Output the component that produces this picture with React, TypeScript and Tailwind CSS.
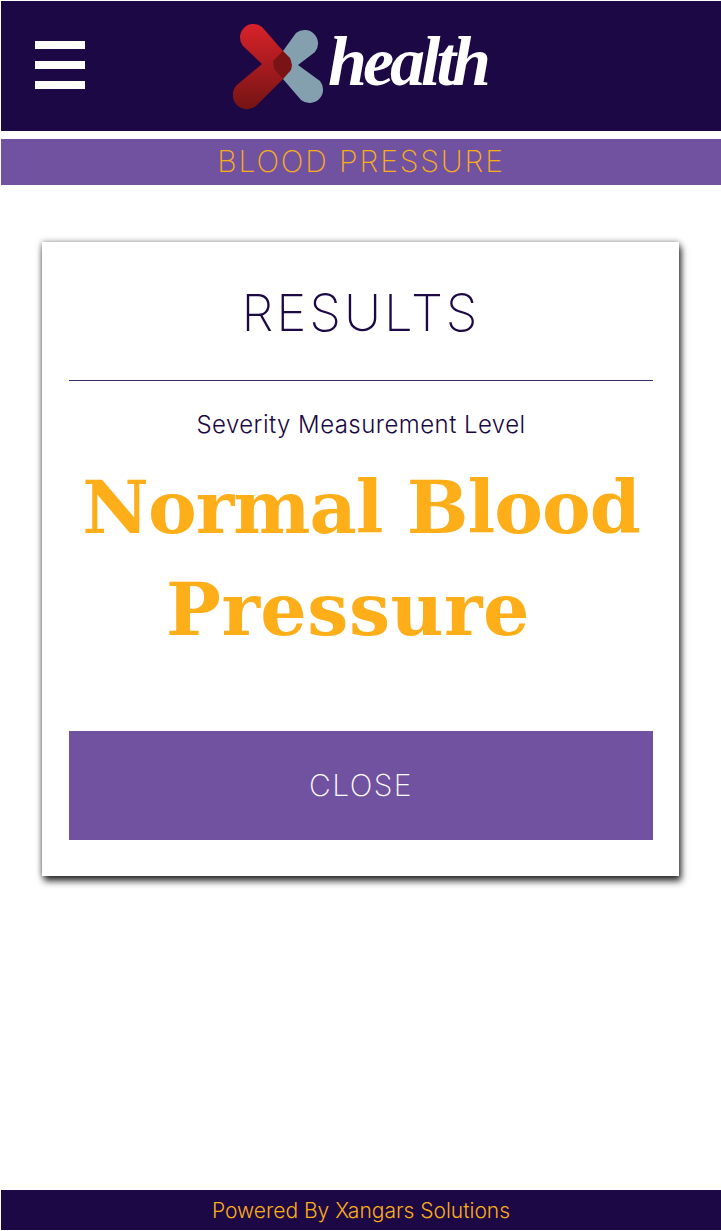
function Logo() {
  return (
    <svg width="92" height="88" viewBox="233 22 92 88" className="shrink-0">
      <defs>
        <linearGradient id="redGrad" x1="0" y1="0" x2="0" y2="1">
          <stop offset="0" stopColor="#d82229" />
          <stop offset="1" stopColor="#741414" />
        </linearGradient>
      </defs>
      <path d="M283 51 L296 33 A13.5 13.5 0 0 1 315 52 L298 65 L320 81 A13.5 13.5 0 0 1 301 100 L283 79 Z" fill="#84a0af" />
      <path d="M243 46 A13.5 13.5 0 0 1 262 27 L283 51 L292 65 L283 79 L256 106 A14.2 14.2 0 0 1 238 84 L262 64 Z" fill="url(#redGrad)" />
      <path d="M283 51 L290 58 Q293 65 291 70 L283 79 L274 69 L273 61 Z" fill="#7a1315" />
    </svg>
  );
}

export default function App() {
  return (
    <div className="w-[721px] h-[1231px] bg-white flex flex-col pt-px pb-px pl-px overflow-hidden font-['Inter',sans-serif]">
      <header className="h-[130px] shrink-0 bg-[#1b0845] flex items-center">
        <div className="ml-[34px] w-[50px] flex flex-col gap-[12px] mb-[3px]">
          <div className="h-[8px] bg-white" />
          <div className="h-[8px] bg-white" />
          <div className="h-[8px] bg-white" />
        </div>
        <div className="ml-[148px] flex items-center mb-px">
          <Logo />
          <span className="text-white text-[70px] leading-none italic font-bold font-['Liberation_Serif',serif] tracking-[-4px] ml-[3px] mt-[-8px]">
            health
          </span>
        </div>
      </header>
      <div className="h-[46px] shrink-0 mt-[8px] bg-[#7152a0] flex items-center justify-center text-[#fbad18] text-[30px] font-extralight tracking-[1.9px] pb-px">
        BLOOD PRESSURE
      </div>
      <main className="flex-1 pl-[41px] pr-[42px] pt-[57px]">
        <section className="h-[634px] bg-white shadow-[2px_5px_7px_rgba(0,0,0,0.8),0_0_6px_rgba(0,0,0,0.4)] pl-[27px] pr-[26px] flex flex-col">
          <h1 className="h-[139px] shrink-0 border-b border-[#3b2a6b] flex items-center justify-center text-[#1b0845] text-[51px] font-extralight tracking-[3px] pt-[4px]">
            RESULTS
          </h1>
          <p className="mt-[29px] text-center text-[#1b0845] text-[24px] leading-[30px] font-light tracking-[0.45px]">
            Severity Measurement Level
          </p>
          <div className="mt-[16px] h-[275px] shrink-0 text-center text-[#fdae19] text-[73px] leading-[102px] font-bold font-['DejaVu_Serif',serif] tracking-[-1px]">
            <p>Normal Blood</p>
            <p className="pr-[26px] tracking-[0.5px]">Pressure</p>
          </div>
          <button className="h-[109px] shrink-0 bg-[#7152a0] text-white text-[30px] font-extralight tracking-[1.4px]">
            CLOSE
          </button>
        </section>
      </main>
      <footer className="h-[40px] shrink-0 bg-[#1b0845] flex items-center justify-center text-[#fbad18] text-[21px] font-light pt-[2px]">
        Powered By Xangars Solutions
      </footer>
    </div>
  );
}
